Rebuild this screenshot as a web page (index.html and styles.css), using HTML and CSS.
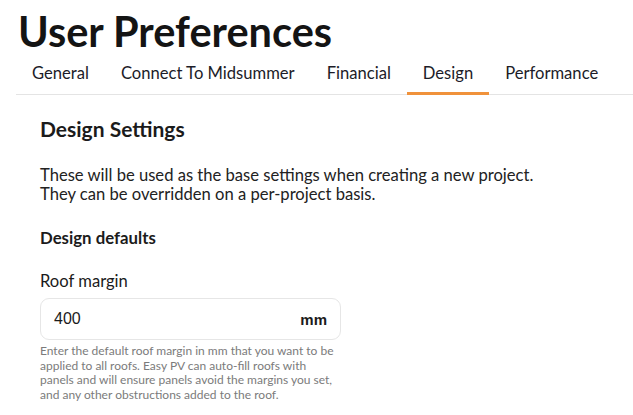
FILE: index.html
```html
<!DOCTYPE html>
<html>
<head>
<meta charset="utf-8">
<link rel="stylesheet" href="styles.css">
</head>
<body>
<div class="page">
  <h1 class="title">User Preferences</h1>
  <nav class="tabs">
    <div class="tab">General</div>
    <div class="tab">Connect To Midsummer</div>
    <div class="tab">Financial</div>
    <div class="tab active">Design</div>
    <div class="tab">Performance</div>
  </nav>
  <section class="panel">
    <h2 class="panel-title">Design Settings</h2>
    <p class="intro">These will be used as the base settings when creating a new project.<br>They can be overridden on a per-project basis.</p>
    <h3 class="group-title">Design defaults</h3>
    <label class="field-label">Roof margin</label>
    <div class="input">
      <span class="input-value">400</span>
      <span class="input-unit">mm</span>
    </div>
    <p class="help">Enter the default roof margin in mm that you want to be applied to all roofs. Easy PV can auto-fill roofs with panels and will ensure panels avoid the margins you set, and any other obstructions added to the roof.</p>
  </section>
</div>
</body>
</html>
```
FILE: styles.css
```css
* { box-sizing: border-box; }
html, body { margin: 0; padding: 0; background: #fff; }
body { font-family: Lato, "Open Sans", sans-serif; color: #1b1b1b; overflow: hidden; }
.page { padding: 7px 0 0 16px; }
.title { margin: 0 0 0 2px; font-size: 41.5px; font-weight: 700; line-height: 48px; color: #141414; }
.tabs { display: flex; border-bottom: 1px solid #e4e4e4; margin-top: 0; }
.tab { padding: 8px 16px 9px; font-size: 16.6px; line-height: 20px; border-bottom: 3px solid transparent; margin-bottom: -1px; color: #1c1c28; }
.active { border-bottom-color: #f0923b; }
.panel { padding: 21px 0 0 24px; }
.panel-title { margin: 0; font-size: 21px; font-weight: 700; line-height: 26px; }
.intro { margin: 24px 0 0; font-size: 16.6px; line-height: 18.5px; color: #222; }
.group-title { margin: 25px 0 0; font-size: 16.8px; font-weight: 700; line-height: 20px; }
.field-label { display: block; margin-top: 23px; font-size: 16.6px; line-height: 20px; }
.input { display: flex; justify-content: space-between; align-items: center; width: 301px; height: 42px; margin-top: 7px; padding: 0 13px; border: 1px solid #e6e6e6; border-radius: 9px; font-family: "Liberation Sans", Arial, sans-serif; font-size: 16px; color: #1b1b1b; }
.input-unit { font-weight: 700; font-size: 15px; }
.help { margin: 4px 0 0; width: 300px; font-size: 12px; line-height: 14.5px; color: #7b7b7b; }
```
